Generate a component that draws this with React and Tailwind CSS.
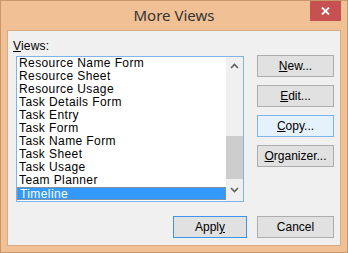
import React from "react";

const items = [
  "Resource Name Form",
  "Resource Sheet",
  "Resource Usage",
  "Task Details Form",
  "Task Entry",
  "Task Form",
  "Task Name Form",
  "Task Sheet",
  "Task Usage",
  "Team Planner",
  "Timeline",
];

function Btn({ children, variant, w = "w-[77px]" }) {
  const cls =
    variant === "hover"
      ? "border-[#7eb4ea] bg-[#e5f1fb]"
      : variant === "default"
      ? "border-[#3c94ee] bg-[#e1e1e1]"
      : "border-[#adadad] bg-[#e1e1e1]";
  return (
    <div
      className={`${w} h-[22px] border ${cls} flex items-center justify-center text-[12px] text-black`}
    >
      {children}
    </div>
  );
}

export default function App() {
  return (
    <div
      className="w-[348px] h-[253px] bg-[#f2c095] border border-[#c9976c] flex flex-col relative"
      style={{ fontFamily: '"Liberation Sans", Arial, sans-serif' }}
    >
      <div className="h-[29px] flex items-center justify-center text-[15px] text-[#333333] pb-[1px]" style={{ fontFamily: '"Noto Sans", "Liberation Sans", sans-serif' }}>
        More Views
      </div>
      <div className="absolute right-[6px] top-0 w-[31px] h-[20px] bg-[#c75050] flex items-center justify-center">
        <svg width="9" height="8" viewBox="0 0 9 8">
          <path d="M1 0.5 L8 7.5 M8 0.5 L1 7.5" stroke="white" strokeWidth="1.8" />
        </svg>
      </div>
      <div className="mx-[6px] h-[216px] border border-[#d9ab80] bg-[#f0f0f0] flex flex-col">
        <div className="flex pl-[8px]">
          <div className="flex flex-col">
            <div className="text-[12px] leading-[13px] text-black mt-[9px] ml-[-3px] h-[16px] tracking-[0.2px]">
              <span className="underline">V</span>iews:
            </div>
            <div className="w-[228px] h-[146px] border border-[#7eb4ea] bg-white flex">
              <div className="w-[209px] flex flex-col">
                {items.map((it) => (
                  <div
                    key={it}
                    className={`h-[13px] leading-[13px] text-[12px] pl-[2px] whitespace-nowrap tracking-[0.4px] ${
                      it === "Timeline"
                        ? "bg-[#3399ff] text-white border border-dotted border-[#cc8a44] pl-[1px] leading-[11px]"
                        : "text-black"
                    }`}
                  >
                    {it}
                  </div>
                ))}
              </div>
              <div className="w-[17px] bg-[#f0f0f0] flex flex-col">
                <div className="h-[17px] flex items-center justify-center">
                  <svg width="9" height="6" viewBox="0 0 9 6">
                    <path d="M1 5 L4.5 1.5 L8 5" stroke="#606060" strokeWidth="1.6" fill="none" />
                  </svg>
                </div>
                <div className="h-[62px]" />
                <div className="h-[43px] bg-[#cdcdcd]" />
                <div className="flex-1 flex items-center justify-center">
                  <svg width="9" height="6" viewBox="0 0 9 6">
                    <path d="M1 1 L4.5 4.5 L8 1" stroke="#606060" strokeWidth="1.6" fill="none" />
                  </svg>
                </div>
              </div>
            </div>
          </div>
          <div className="flex flex-col gap-[8px] ml-[13px] mt-[24px]">
            <Btn>
              <span className="underline">N</span>ew...
            </Btn>
            <Btn>
              <span className="underline">E</span>dit...
            </Btn>
            <Btn variant="hover">
              <span className="underline">C</span>opy...
            </Btn>
            <Btn>
              <span className="underline">O</span>rganizer...
            </Btn>
          </div>
        </div>
        <div className="flex justify-end gap-[10px] mt-[14px] pr-[6px]">
          <Btn variant="default" w="w-[74px]">
            Appl<span className="underline">y</span>
          </Btn>
          <Btn>Cancel</Btn>
        </div>
      </div>
    </div>
  );
}
